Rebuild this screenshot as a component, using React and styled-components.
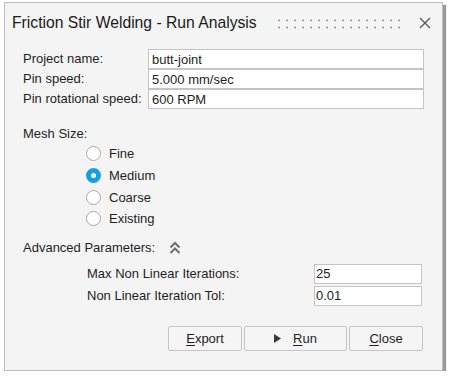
import styled, { createGlobalStyle } from "styled-components";

const GlobalStyle = createGlobalStyle`
  html, body {
    margin: 0;
    padding: 0;
    background: #ffffff;
  }
  body {
    font-family: "Liberation Sans", Arial, sans-serif;
    font-size: 13px;
    color: #1e1e1e;
  }
  * {
    box-sizing: border-box;
  }
`;

const meshOptions = ["Fine", "Medium", "Coarse", "Existing"];

const App = () => {
  return (
    <>
      <GlobalStyle />
      <Dialog>
        <TitleBar>
          <Title>Friction Stir Welding - Run Analysis</Title>
          <Grip />
          <CloseIcon width="12" height="12" viewBox="0 0 12 12">
            <path d="M1 1 L11 11 M11 1 L1 11" stroke="#5a5a5a" strokeWidth="1.4" fill="none" />
          </CloseIcon>
        </TitleBar>

        <Body>
          <FieldGrid>
            <FieldLabel>Project name:</FieldLabel>
            <TextBox readOnly defaultValue="butt-joint" />
            <FieldLabel>Pin speed:</FieldLabel>
            <TextBox readOnly defaultValue="5.000 mm/sec" />
            <FieldLabel>Pin rotational speed:</FieldLabel>
            <TextBox readOnly defaultValue="600 RPM" />
          </FieldGrid>

          <SectionLabel>Mesh Size:</SectionLabel>
          <RadioList>
            {meshOptions.map((opt) => (
              <RadioRow key={opt}>
                <RadioDot $checked={opt === "Medium"} />
                <span>{opt}</span>
              </RadioRow>
            ))}
          </RadioList>

          <AdvancedHeader>
            <span>Advanced Parameters:</span>
            <svg width="12" height="14" viewBox="0 0 12 14">
              <path
                d="M1.5 6.5 L6 2 L10.5 6.5 M1.5 12 L6 7.5 L10.5 12"
                stroke="#6e6e6e"
                strokeWidth="2"
                fill="none"
              />
            </svg>
          </AdvancedHeader>

          <ParamGrid>
            <FieldLabel>Max Non Linear Iterations:</FieldLabel>
            <TextBox readOnly defaultValue="25" $pad={1} />
            <FieldLabel>Non Linear Iteration Tol:</FieldLabel>
            <TextBox readOnly defaultValue="0.01" $pad={1} />
          </ParamGrid>

          <ButtonRow>
            <Button $w={74}>
              <span><u>E</u>xport</span>
            </Button>
            <Button $w={103}>
              <PlayIcon width="7" height="9" viewBox="0 0 7 9">
                <path d="M0 0 L7 4.5 L0 9 Z" fill="#3a3a3a" />
              </PlayIcon>
              <span><u>R</u>un</span>
            </Button>
            <Button $w={74}>
              <span><u>C</u>lose</span>
            </Button>
          </ButtonRow>
        </Body>
      </Dialog>
    </>
  );
};

const Dialog = styled.div`
  margin: 2px 0 0 4px;
  width: 439px;
  background: #f4f4f4;
  border: 1px solid #bdbdbd;
  box-shadow: 3px 3px 1px rgba(0, 0, 0, 0.4);
`;

const TitleBar = styled.div`
  display: flex;
  align-items: center;
  height: 40px;
  padding: 0 11px 0 7px;
`;

const Title = styled.div`
  font-size: 15.7px;
  color: #1a1a1a;
  white-space: nowrap;
`;

const Grip = styled.div`
  margin-left: auto;
  width: 130px;
  height: 11px;
  background-image: radial-gradient(circle, #a3a3a3 0.9px, transparent 1.3px);
  background-size: 8px 7px;
  background-position: 0 -1px;
`;

const CloseIcon = styled.svg`
  margin-left: 14px;
  flex-shrink: 0;
`;

const Body = styled.div`
  padding: 6px 18px 19px 18px;
`;

const FieldGrid = styled.div`
  display: grid;
  grid-template-columns: 125px 1fr;
  grid-auto-rows: 20px;
`;

const FieldLabel = styled.div`
  line-height: 20px;
  white-space: nowrap;
`;

const TextBox = styled.input`
  height: 20px;
  width: 100%;
  margin: 0;
  border: 1px solid #c4c4c4;
  background: #ffffff;
  padding: 0 0 0 ${(p) => p.$pad ?? 3}px;
  font-family: "Liberation Sans", Arial, sans-serif;
  font-size: 13px;
  color: #1e1e1e;
  outline: none;
`;

const SectionLabel = styled.div`
  margin-top: 17px;
  line-height: 16px;
`;

const RadioList = styled.div`
  margin: 1px 0 0 63px;
  display: flex;
  flex-direction: column;
`;

const RadioRow = styled.div`
  display: flex;
  align-items: center;
  gap: 8px;
  height: 21.7px;
`;

const RadioDot = styled.span`
  width: 15px;
  height: 15px;
  border-radius: 50%;
  flex-shrink: 0;
  background: #ffffff;
  border: ${(p) => (p.$checked ? "5px solid #179fe0" : "1.5px solid #a9a9a9")};
`;

const AdvancedHeader = styled.div`
  margin-top: 10px;
  display: flex;
  align-items: center;
  gap: 14px;
  line-height: 16px;
`;

const ParamGrid = styled.div`
  margin: 8px 2px 0 64px;
  display: grid;
  grid-template-columns: 1fr 108px;
  grid-auto-rows: 20px;
  row-gap: 2px;
`;

const ButtonRow = styled.div`
  margin: 20px 1px 0 0;
  display: flex;
  justify-content: flex-end;
  gap: 2px;
`;

const Button = styled.button`
  width: ${(p) => p.$w}px;
  height: 25px;
  display: flex;
  align-items: center;
  justify-content: center;
  gap: 12px;
  background: #f5f5f5;
  border: 1px solid #c6c6c6;
  border-radius: 2px;
  font-family: "Liberation Sans", Arial, sans-serif;
  font-size: 13px;
  color: #1e1e1e;
  padding: 0;

  u {
    text-decoration-thickness: 1px;
    text-underline-offset: 2px;
  }
`;

const PlayIcon = styled.svg`
  flex-shrink: 0;
`;

export default App;
